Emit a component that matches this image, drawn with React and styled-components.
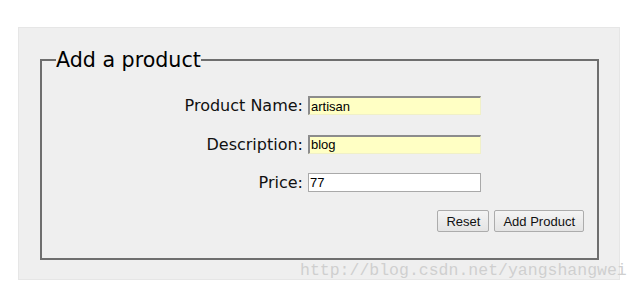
import React from 'react';
import styled, { createGlobalStyle } from 'styled-components';

const Global = createGlobalStyle`
  body {
    margin: 0;
    background: #ffffff;
    font-family: "DejaVu Sans", Verdana, sans-serif;
  }
`;

const Page = styled.div`
  position: relative;
  width: 642px;
  height: 291px;
  padding: 27px 0 0 18px;
  box-sizing: border-box;
`;

const Panel = styled.div`
  width: 602px;
  height: 253px;
  box-sizing: border-box;
  background: #efefef;
  border: 1px solid #e6e6e6;
  padding: 20px 0 0 21px;
`;

const Fieldset = styled.fieldset`
  width: 559px;
  height: 212px;
  box-sizing: border-box;
  margin: 0;
  border: 2px solid #6e6e6e;
  padding: 0 13px 0 14px;
`;

const Legend = styled.legend`
  padding: 0;
  font-size: 20.6px;
  color: #000;
`;

const Rows = styled.div`
  display: flex;
  flex-direction: column;
  gap: 19.5px;
  padding-top: 24px;
`;

const Row = styled.div`
  display: flex;
  align-items: center;
  gap: 5px;
`;

const Label = styled.label`
  width: 247px;
  text-align: right;
  font-size: 16px;
  color: #111;
`;

const Input = styled.input`
  width: 173px;
  height: 19px;
  box-sizing: border-box;
  margin: 0;
  padding: 0 1px;
  font-family: "Liberation Sans", Arial, sans-serif;
  font-size: 13px;
  color: #000;
  outline: none;
  background: ${(p) => (p.$filled ? '#ffffc4' : '#ffffff')};
  border: 1px solid #a9a9a9;
  ${(p) =>
    p.$filled &&
    `
    border-top: 2px solid #8c8c8c;
    border-left: 2px solid #8c8c8c;
    border-right: 1px solid #f0f0c8;
    border-bottom: 1px solid #f0f0c8;
  `}
`;

const Actions = styled.div`
  display: flex;
  justify-content: flex-end;
  gap: 5px;
  margin-top: 18px;
`;

const Button = styled.button`
  height: 22px;
  margin: 0;
  padding: 0 8px;
  font-family: "Liberation Sans", Arial, sans-serif;
  font-size: 13px;
  color: #111;
  background: linear-gradient(#f4f4f4, #e4e4e4);
  border: 1px solid #acacac;
  border-radius: 2px;
`;

const Watermark = styled.div`
  position: absolute;
  left: 300px;
  top: 259px;
  font-family: "Liberation Mono", "Courier New", monospace;
  font-size: 16.5px;
  line-height: 24px;
  color: #cfcfcf;
  pointer-events: none;
`;

export default function App() {
  return (
    <>
      <Global />
      <Page>
        <Panel>
          <Fieldset>
            <Legend>Add a product</Legend>
            <Rows>
              <Row>
                <Label>Product Name:</Label>
                <Input $filled defaultValue="artisan" />
              </Row>
              <Row>
                <Label>Description:</Label>
                <Input $filled defaultValue="blog" />
              </Row>
              <Row>
                <Label>Price:</Label>
                <Input defaultValue="77" />
              </Row>
            </Rows>
            <Actions>
              <Button type="reset">Reset</Button>
              <Button type="button">Add Product</Button>
            </Actions>
          </Fieldset>
        </Panel>
        <Watermark>http://blog.csdn.net/yangshangwei</Watermark>
      </Page>
    </>
  );
}
